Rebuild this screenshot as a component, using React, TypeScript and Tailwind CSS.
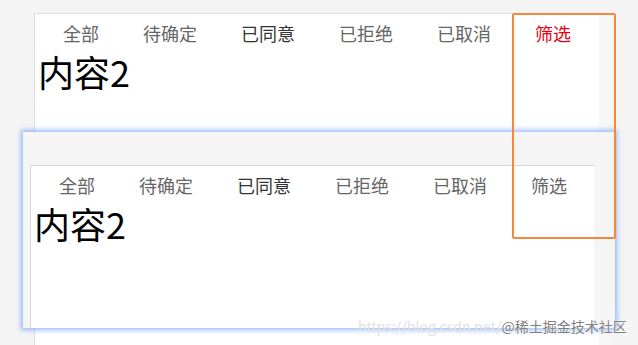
import React from "react";

const tabs = ["全部", "待确定", "已同意", "已拒绝", "已取消", "筛选"];

function Panel({ active }: { active: boolean }) {
  return (
    <div className="flex flex-col">
      <div className="flex h-[37px] items-center gap-[44px] pl-[28px] text-[18px] leading-[20px]">
        {tabs.map((t, i) => (
          <span
            key={t}
            className={
              i === 5
                ? active
                  ? "text-[#e60012]"
                  : "text-[#666666]"
                : i === 2
                ? "text-[#333333]"
                : "text-[#666666]"
            }
          >
            {t}
          </span>
        ))}
      </div>
      <div className="pl-[3px] text-[36px] leading-[40px] text-black">内容2</div>
    </div>
  );
}

export default function App() {
  return (
    <div
      className="relative h-[345px] w-[638px] overflow-hidden bg-[#f4f4f4]"
      style={{ fontFamily: '"Noto Sans CJK SC", "Noto Sans", sans-serif' }}
    >
      <div className="flex pt-[13px]">
        <div className="w-[34px] shrink-0" />
        <div className="h-[340px] w-[565px] border-l border-t border-[#dddddd] bg-white">
          <Panel active={true} />
        </div>
        <div className="h-[340px] w-[15px] bg-[#f7f7f7]" />
      </div>

      <div className="absolute left-[23px] top-[132px] flex h-[196px] w-[592px] flex-col bg-[#f5f5f5] pl-[7px] pr-[21px] pt-[33px] shadow-[0_0_5px_2px_rgba(105,155,245,0.7)]">
        <div className="flex-1 border-l border-t border-[#d8d8d8] bg-white">
          <Panel active={false} />
        </div>
      </div>

      <div className="absolute left-[512px] top-[13px] h-[226px] w-[104px] rounded-[2px] border-2 border-[#f5883b]" />

      <div className="absolute left-[358px] top-[317px] flex items-center whitespace-nowrap text-[14px] leading-[18px]">
        <span className="text-[#e2e2e2]">https://blog.csdn.net/</span>
        <span className="text-[#808080]" style={{ textShadow: "0 0 2px #ffffff" }}>
          @稀土掘金技术社区
        </span>
      </div>
    </div>
  );
}
